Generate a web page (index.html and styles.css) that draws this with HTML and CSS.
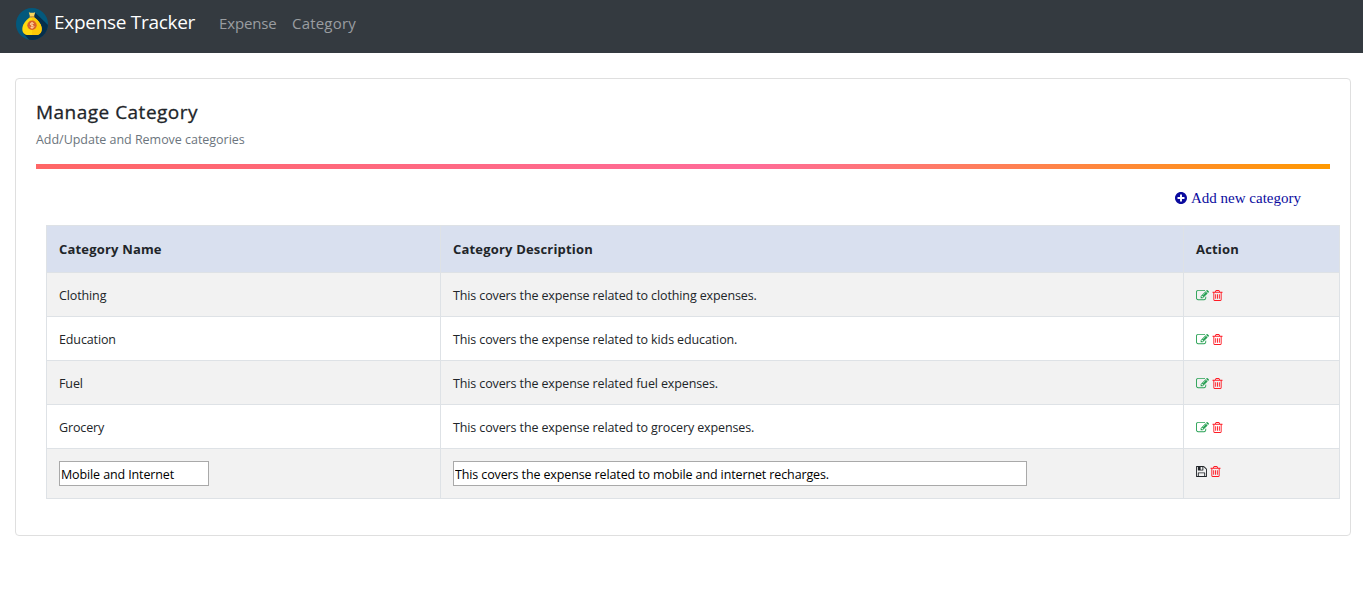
FILE: index.html
```html
<!DOCTYPE html>
<html lang="en">
<head>
<meta charset="utf-8">
<title>Expense Tracker</title>
<link rel="stylesheet" href="styles.css">
</head>
<body>
<svg class="sprite" aria-hidden="true">
  <symbol id="edit" viewBox="0 0 1792 1792"><path d="M888 1184l116-116-152-152-116 116v56h96v96h56zm440-720q-16-16-33 1l-350 350q-17 17-1 33t33-1l350-350q17-17 1-33zm80 594v190q0 119-84.5 203.5t-203.5 84.5h-832q-119 0-203.5-84.5t-84.5-203.5v-832q0-119 84.5-203.5t203.5-84.5h832q63 0 117 25 15 7 18 23 3 17-9 29l-49 49q-14 14-32 8-23-6-45-6h-832q-66 0-113 47t-47 113v832q0 66 47 113t113 47h832q66 0 113-47t47-113v-126q0-13 9-22l64-64q15-15 35-7t20 29zm-96-738l288 288-672 672h-288v-288zm444 132l-92 92-288-288 92-92q28-28 68-28t68 28l152 152q28 28 28 68t-28 68z"/></symbol>
  <symbol id="trash" viewBox="192 128 1408 1536"><path d="M704 736v576q0 14-9 23t-23 9h-64q-14 0-23-9t-9-23v-576q0-14 9-23t23-9h64q14 0 23 9t9 23zm256 0v576q0 14-9 23t-23 9h-64q-14 0-23-9t-9-23v-576q0-14 9-23t23-9h64q14 0 23 9t9 23zm256 0v576q0 14-9 23t-23 9h-64q-14 0-23-9t-9-23v-576q0-14 9-23t23-9h64q14 0 23 9t9 23zm128 724v-948h-896v948q0 22 7 40.5t14.5 27 10.5 8.5h832q3 0 10.500-8.500t14.500-27 7-40.500zm-672-1076h448l-48-117q-7-9-17-11h-317q-10 2-17 11zm928 32v64q0 14-9 23t-23 9h-96v948q0 83-47 143.500t-113 60.500h-832q-66 0-113-58.500t-47-141.500v-952h-96q-14 0-23-9t-9-23v-64q0-14 9-23t23-9h309l70-167q15-37 54-63t79-26h320q40 0 79 26t54 63l70 167h309q14 0 23 9t9 23z"/></symbol>
  <symbol id="save" viewBox="128 128 1536 1536"><path d="M512 1536h768v-384h-768v384zm896 0h128v-896q0-14-10-38.500t-20-34.500l-281-281q-10-10-34-20t-39-10v416q0 40-28 68t-68 28h-576q-40 0-68-28t-28-68v-416h-128v1280h128v-416q0-40 28-68t68-28h832q40 0 68 28t28 68v416zm-384-928v-320q0-13-9.500-22.500t-22.500-9.500h-192q-13 0-22.500 9.500t-9.500 22.500v320q0 13 9.500 22.500t22.500 9.500h192q13 0 22.500-9.500t9.500-22.500zm640 32v928q0 40-28 68t-68 28h-1344q-40 0-68-28t-28-68v-1344q0-40 28-68t68-28h928q40 0 88 20t76 48l280 280q28 28 48 76t20 88z"/></symbol>
</svg>
<nav class="navbar">
  <svg class="logo" viewBox="0 0 32 32">
    <defs><clipPath id="disc"><circle cx="16" cy="16" r="16"/></clipPath></defs>
    <circle cx="16" cy="16" r="16" fill="#03587c"/>
    <path clip-path="url(#disc)" d="M19 4.500L34 19v15H15l-7-8z" fill="#062e4b"/>
    <path d="M12.800 4.200q3.200 1 6.400 0L18 8.400h-4z" fill="#fbd45c"/>
    <path d="M14 9.200C9.500 12.500 6.300 16.500 6.300 21c0 4.200 2.700 6 5.700 6h8c3 0 5.700-1.800 5.700-6 0-4.500-3.200-8.500-7.700-11.800z" fill="#ffd90f"/>
    <path d="M16 9.200h2c4.500 3.300 7.700 7.300 7.700 11.800 0 4.200-2.700 6-5.700 6h-4z" fill="#fdc908"/>
    <path d="M13.600 8.300h4.800v1.200h-4.800z" fill="#e5a03a"/>
    <circle cx="16" cy="17.300" r="4.700" fill="#d9622b"/>
    <path d="M17.900 15.800c-.3-1-3.700-1.200-3.700.3s3.700.9 3.700 2.500-3.500 1.500-3.800.2M16 14v6.700" fill="none" stroke="#ffd7a0" stroke-width="1"/>
  </svg>
  <a class="brand">Expense Tracker</a>
  <a class="nav-link nav-expense">Expense</a>
  <a class="nav-link nav-category">Category</a>
</nav>
<main class="card">
  <h1 class="title">Manage Category</h1>
  <p class="subtitle">Add/Update and Remove categories</p>
  <div class="divider"></div>
  <a class="add">
    <svg class="plus" viewBox="8 8 496 496"><path d="M256 8C119 8 8 119 8 256s111 248 248 248 248-111 248-248S393 8 256 8zm144 276c0 6.600-5.400 12-12 12h-92v92c0 6.600-5.400 12-12 12h-56c-6.600 0-12-5.400-12-12v-92h-92c-6.600 0-12-5.400-12-12v-56c0-6.600 5.400-12 12-12h92v-92c0-6.600 5.400-12 12-12h56c6.600 0 12 5.400 12 12v92h92c6.600 0 12 5.400 12 12v56z"/></svg>
    <span>Add new category</span>
  </a>
  <table class="table">
    <colgroup><col class="col-name"><col class="col-desc"><col class="col-action"></colgroup>
    <thead>
      <tr><th>Category Name</th><th>Category Description</th><th>Action</th></tr>
    </thead>
    <tbody>
      <tr><td>Clothing</td><td>This covers the expense related to clothing expenses.</td><td><div class="actions"><svg class="edit"><use href="#edit"/></svg><svg class="trash"><use href="#trash"/></svg></div></td></tr>
      <tr><td>Education</td><td>This covers the expense related to kids education.</td><td><div class="actions"><svg class="edit"><use href="#edit"/></svg><svg class="trash"><use href="#trash"/></svg></div></td></tr>
      <tr><td>Fuel</td><td>This covers the expense related fuel expenses.</td><td><div class="actions"><svg class="edit"><use href="#edit"/></svg><svg class="trash"><use href="#trash"/></svg></div></td></tr>
      <tr><td>Grocery</td><td>This covers the expense related to grocery expenses.</td><td><div class="actions"><svg class="edit"><use href="#edit"/></svg><svg class="trash"><use href="#trash"/></svg></div></td></tr>
      <tr class="editing"><td><input class="field field-name" value="Mobile and Internet"></td><td><input class="field field-desc" value="This covers the expense related to mobile and internet recharges."></td><td><div class="actions"><svg class="save"><use href="#save"/></svg><svg class="trash"><use href="#trash"/></svg></div></td></tr>
    </tbody>
  </table>
</main>
</body>
</html>
```
FILE: styles.css
```css
* { box-sizing: border-box; }
body {
  margin: 0;
  background: #fff;
  color: #212529;
  font-family: "Open Sans", "Noto Sans", sans-serif;
  font-size: 12.5px;
}
.sprite { display: none; }
.navbar {
  display: flex;
  align-items: center;
  height: 53px;
  padding: 0 16px 6px;
  background: #343a40;
  white-space: nowrap;
}
.logo { width: 32px; height: 32px; margin-right: 6px; }
.brand { width: 165px; color: #fff; font-size: 19px; letter-spacing: -0.29px; line-height: 30px; padding-bottom: 3px; }
.nav-link { color: #9a9da0; font-size: 15px; line-height: 24px; padding-bottom: 2px; }
.nav-expense { width: 73px; letter-spacing: -0.15px; }
.nav-category { letter-spacing: 0.2px; }
.card {
  width: 1336px;
  height: 458px;
  margin: 25px 0 0 15px;
  padding: 20px;
  border: 1px solid #dfdfdf;
  border-radius: 4px;
}
.title {
  margin: 0;
  font-size: 19px;
  font-weight: 500;
  letter-spacing: 0.48px;
  line-height: 26px;
  -webkit-text-stroke: 0.3px #212529;
}
.subtitle { margin: 5px 0 0; color: #6c757d; letter-spacing: -0.03px; line-height: 20px; }
.divider {
  width: 1294px;
  height: 5px;
  margin-top: 14px;
  background: linear-gradient(to right, #ff6666, #ff6b99 55%, #ff9900);
}
.add {
  display: flex;
  align-items: center;
  justify-content: flex-end;
  gap: 4px;
  height: 20px;
  margin: 19px 29px 0 0;
  color: #0b0b9e;
  font: 15px/20px "Liberation Serif", serif;
}
.plus { width: 12px; height: 12px; fill: currentColor; }
.table {
  width: 1294px;
  margin: 17px 0 0 10px;
  border-collapse: collapse;
  table-layout: fixed;
}
.col-name { width: 394px; }
.col-desc { width: 743px; }
.col-action { width: 156px; }
th, td {
  height: 44px;
  padding: 2px 12px 0;
  border: 1px solid #dee2e6;
  text-align: left;
  vertical-align: middle;
  white-space: nowrap;
  letter-spacing: -0.12px;
  line-height: 18px;
}
th { height: 47px; padding-top: 0; background: #d9e0ef; font-size: 13px; font-weight: 700; letter-spacing: 0.18px; }
tbody tr:nth-child(odd) { background: #f2f2f2; }
.editing td { height: 50px; padding-top: 0; }
.actions { display: flex; align-items: center; gap: 3px; height: 18px; }
.edit { width: 13px; height: 13px; fill: #28a154; }
.trash { width: 11px; height: 11px; fill: #ff1a24; }
.save { width: 11px; height: 11px; fill: #212529; }
.editing .actions { margin-bottom: 5px; }
.field {
  display: block;
  height: 25px;
  padding: 2px 1px 0;
  border: 1px solid #a9a9a9;
  border-radius: 0;
  background: #fff;
  color: #000;
  font: inherit;
  letter-spacing: -0.12px;
}
.field-name { width: 150px; }
.field-desc { width: 574px; }
```
